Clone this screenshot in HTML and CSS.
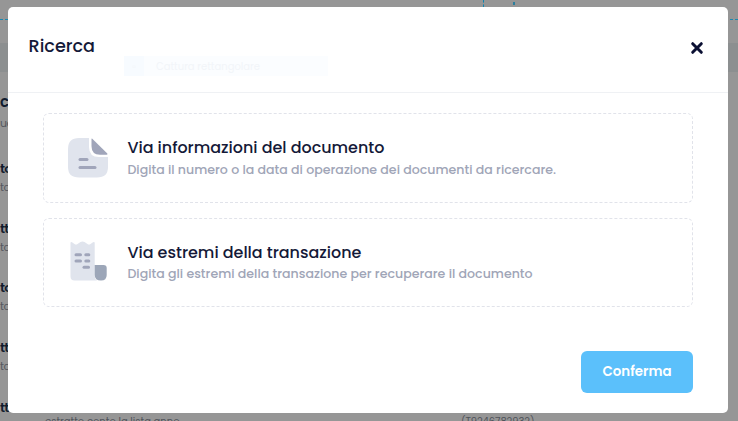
FILE: index.html
```html
<!DOCTYPE html>
<html lang="it">
<head>
<meta charset="utf-8">
<title>Ricerca</title>
<link rel="stylesheet" href="styles.css">
</head>
<body>
<div class="page" aria-hidden="true">
  <div class="page-top"><i class="tick tick-a"></i><i class="tick tick-b"></i></div>
  <div class="page-gap"></div>
  <div class="page-band"></div>
  <div class="page-list">
    <div class="entry first"><b>c</b><span>uc</span></div>
    <div class="entry"><b>to</b><span>to</span></div>
    <div class="entry"><b>tt</b><span>to</span></div>
    <div class="entry"><b>to</b><span>to</span></div>
    <div class="entry"><b>tt</b><span>to</span></div>
    <div class="entry last"><b>tt</b></div>
  </div>
  <div class="page-foot"><span>estratto conto la lista anno</span><span class="code">(T9246782932)</span></div>
</div>
<main class="dialog">
  <header class="head">
    <h1>Ricerca</h1>
    <div class="ghost"><span class="ghost-icon">▫</span><span>Cattura rettangolare</span></div>
    <button class="close" aria-label="Chiudi">
      <svg width="14" height="14" viewBox="0 0 14 14"><path d="M2.7 2.7 11.3 11.3M11.3 2.7 2.7 11.3"/></svg>
    </button>
  </header>
  <section class="options">
    <div class="option">
      <svg class="icon" width="40" height="40" viewBox="0 0 40 40">
        <path class="light" d="M11 0H21V9Q21 19 31 19H40V29Q40 39.5 29 39.5H11Q0 39.5 0 29V11Q0 0 11 0Z"/>
        <path class="dark" d="M23.5 1Q23.5 0 24.3.7L39.3 15.5Q40 16.7 38.5 16.7H32Q23.5 16.7 23.5 8Z"/>
        <rect class="dark" x="10.5" y="20" width="10" height="3" rx="1.5"/>
        <rect class="dark" x="10.5" y="28" width="18" height="3" rx="1.5"/>
      </svg>
      <div><h2>Via informazioni del documento</h2><p>Digita il numero o la data di operazione dei documenti da ricercare.</p></div>
    </div>
    <div class="option second">
      <svg class="icon" width="40" height="40" viewBox="0 0 40 40">
        <path class="light" d="M2.5 2Q2.5.5 4 1.3L6.5 3Q8 4 9.5 3L12.5 1Q14.5 0 16.5 1L19.5 3Q21 4 22.5 3L25 1.3Q26.7.5 26.7 2V35Q26.7 38 29 39.5H6.5Q2.5 39.5 2.5 35.5Z"/>
        <path class="slate" d="M26.7 24H35.5Q38.7 24 38.7 27V34Q38.7 39.5 33 39.5Q26.7 39.5 26.7 34Z"/>
        <g class="dark"><rect x="6.5" y="12.3" width="7.5" height="3" rx="1.5"/><rect x="16.3" y="12.3" width="6" height="3" rx="1.5"/><rect x="6.5" y="18.5" width="7.5" height="3" rx="1.5"/><rect x="16.3" y="18.5" width="6" height="3" rx="1.5"/><rect x="14.5" y="24.8" width="7.5" height="3" rx="1.5"/></g>
      </svg>
      <div><h2>Via estremi della transazione</h2><p>Digita gli estremi della transazione per recuperare il documento</p></div>
    </div>
  </section>
  <footer class="foot"><button class="confirm">Conferma</button></footer>
</main>
</body>
</html>
```
FILE: styles.css
```css
* { box-sizing: border-box; }
body { margin: 0; width: 738px; height: 421px; overflow: hidden; font-family: Poppins, Inter, "Open Sans", sans-serif; }
h1, h2, p { margin: 0; white-space: nowrap; }
button { border: 0; padding: 0; font-family: inherit; }
svg { display: block; }
.page { width: 738px; height: 421px; background: #969696; overflow: hidden; display: flex; flex-direction: column; }
.page > div { flex: none; }
.page-top { height: 20px; border-bottom: 1px dashed #1b88b0; padding-left: 483px; display: flex; gap: 29px; }
.tick { height: 7px; border-left: 1px dashed #0f85b0; }
.tick-b { border-left: 2px solid #2c7f9e; height: 3px; margin-top: 2px; }
.page-gap { height: 23px; }
.page-band { height: 29px; background: #8c8f90; }
.page-list { height: 341px; padding-top: 20px; }
.entry { height: 59.7px; display: flex; flex-direction: column; white-space: nowrap; }
.entry b { font-size: 13px; line-height: 20px; font-weight: 600; color: #111c2e; letter-spacing: -.7px; }
.entry span { font-size: 11px; line-height: 17px; color: #555860; letter-spacing: -.5px; }
.entry.first { height: 67px; }
.entry.first b { font-size: 15px; line-height: 19px; }
.entry.first span { line-height: 25px; }
.page-foot { height: 14px; padding-left: 45px; display: flex; font-size: 10px; line-height: 17px; color: #50535a; }
.page-foot span { width: 416px; white-space: nowrap; }
.page-foot .code { width: auto; letter-spacing: -.1px; }
.dialog { position: absolute; left: 8px; top: 7px; width: 720px; height: 406px; border-radius: 5px; background: #fff; display: flex; flex-direction: column; }
.head { height: 86px; flex: none; border-bottom: 1px solid #eff1f4; padding: 0 24px 0 20.6px; display: flex; align-items: flex-start; }
h1 { width: 95.4px; padding-top: 27px; font-size: 17.6px; line-height: 24px; font-weight: 500; color: #141938; }
.ghost { width: 204px; height: 20px; margin-top: 49px; display: flex; gap: 12px; background: #fbfdff; color: #f2f5f9; font-size: 10px; line-height: 22px; white-space: nowrap; }
.ghost-icon { width: 20px; text-align: center; background: #f7fbff; }
.close { width: 14px; height: 14px; margin: 34px 0 0 auto; background: none; }
.close path { fill: none; stroke: #0b1033; stroke-width: 3; stroke-linecap: round; }
.options { padding: 20px 35px 0; display: flex; flex-direction: column; gap: 15px; }
.option { height: 90px; border: 1px dashed #e1e3ea; border-radius: 6px; padding: 23px 24px; display: flex; gap: 19.4px; }
.option.second { height: 89px; }
.icon { flex: none; margin-top: 1px; }
.second .icon { margin-top: -1px; }
.light { fill: #e0e4ed; }
.dark { fill: #a0a5ba; }
.slate { fill: #9ca6b8; }
h2 { font-size: 15.95px; line-height: 22px; font-weight: 500; color: #141938; }
p { padding-top: 1px; font-size: 12.58px; line-height: 20px; color: #a0a5b7; font-weight: 500; }
.option.second p { padding-top: 0; }
.foot { margin-top: 44px; padding-right: 35px; display: flex; justify-content: flex-end; }
.confirm { width: 112px; height: 42px; border-radius: 6px; background: #5bc0fb; color: #fff; font-size: 13.4px; line-height: 42px; font-weight: 600; }
```
